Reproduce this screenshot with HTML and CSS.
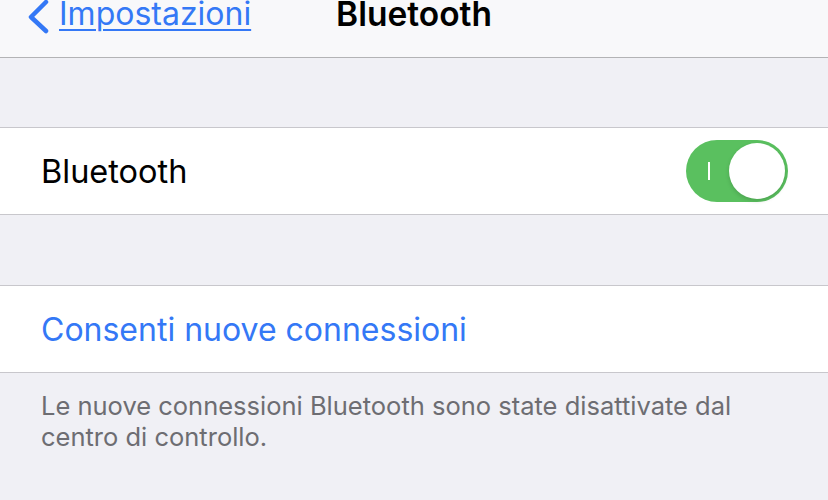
FILE: index.html
```html
<!DOCTYPE html>
<html lang="it">
<head>
    <meta charset="UTF-8">
    <meta name="viewport" content="width=device-width, initial-scale=1.0">
    <title>Bluetooth</title>
    <link rel="stylesheet" href="styles.css">
</head>
<body>
    <div class="nav">
        <a class="back" href="#">
            <svg class="chevron" width="26" height="34" viewBox="0 0 26 34">
                <path d="M21 2 L6 17 L21 31" fill="none" stroke="#3478f6" stroke-width="4.5" stroke-linecap="round" stroke-linejoin="round"/>
            </svg>
            <span class="back-label">Impostazioni</span>
        </a>
        <div class="nav-title">Bluetooth</div>
        <div></div>
    </div>

    <div class="spacer"></div>

    <div class="group">
        <div class="row">
            <span class="row-label">Bluetooth</span>
            <div class="switch">
                <span class="switch-mark"></span>
                <span class="switch-knob"></span>
            </div>
        </div>
    </div>

    <div class="spacer wide"></div>

    <div class="group">
        <div class="row">
            <span class="row-label link">Consenti nuove connessioni</span>
        </div>
    </div>

    <div class="footnote">
        Le nuove connessioni Bluetooth sono state disattivate dal centro di controllo.
    </div>
</body>
</html>
```

FILE: styles.css
```css
body {
    margin: 0;
    font-family: 'Inter', 'Roboto', sans-serif;
    background-color: #f0f0f5;
    width: 828px;
    height: 500px;
    overflow: hidden;
}
.nav {
    height: 57px;
    background-color: #f8f8fa;
    border-bottom: 1px solid #b3b3b5;
    display: grid;
    grid-template-columns: 1fr auto 1fr;
    align-items: start;
}
.back {
    display: flex;
    align-items: flex-start;
    gap: 8px;
    padding-left: 25px;
    color: #3478f6;
    text-decoration: none;
}
.back-label {
    font-size: 32px;
    line-height: 32px;
    margin-top: -2px;
    text-decoration: underline;
    text-decoration-thickness: 2px;
    text-underline-offset: 4px;
}
.nav-title {
    font-size: 33.5px;
    font-weight: 600;
    line-height: 32px;
    margin-top: -2px;
    color: #000;
}
.spacer {
    height: 69px;
}
.spacer.wide {
    height: 70px;
}
.group {
    background-color: #fff;
    border-top: 1px solid #c8c7cc;
    border-bottom: 1px solid #c8c7cc;
}
.row {
    height: 86px;
    padding: 0 40px 0 41px;
    display: flex;
    align-items: center;
    justify-content: space-between;
}
.row-label {
    font-size: 32.5px;
    color: #000;
}
.row-label.link {
    font-size: 32px;
    color: #3478f6;
}
.switch {
    position: relative;
    width: 102px;
    height: 62px;
    border-radius: 31px;
    background-color: #5ac05f;
}
.switch-mark {
    position: absolute;
    left: 22px;
    top: 22px;
    width: 2px;
    height: 18px;
    background-color: #fff;
}
.switch-knob {
    position: absolute;
    right: 3px;
    top: 3px;
    width: 56px;
    height: 56px;
    border-radius: 50%;
    background-color: #fff;
    box-shadow: 0 2px 4px rgba(0, 0, 0, 0.15);
}
.footnote {
    padding: 17px 60px 0 41px;
    font-size: 25.5px;
    line-height: 31px;
    color: #6d6d72;
}
```
